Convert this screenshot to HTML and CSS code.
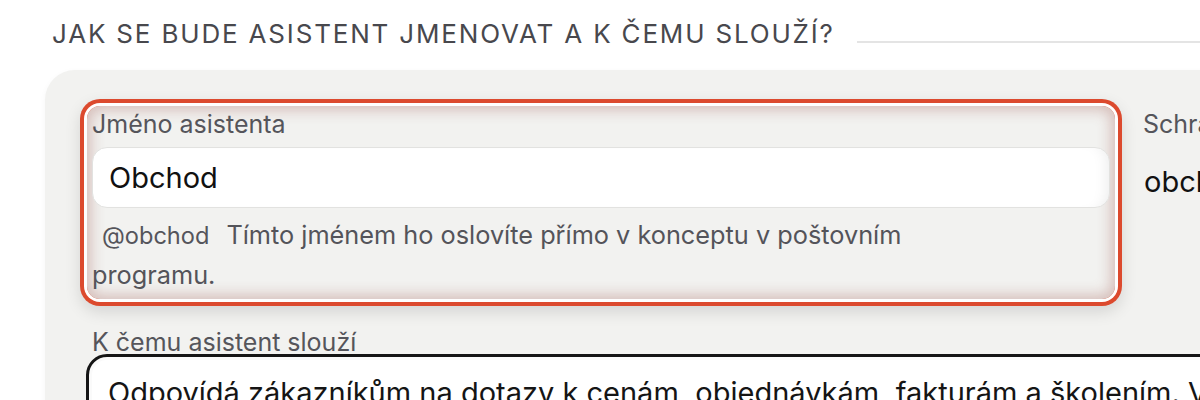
FILE: index.html
```html
<!DOCTYPE html>
<html lang="cs">
<head>
<meta charset="utf-8">
<title>Asistent</title>
<link rel="stylesheet" href="styles.css">
</head>
<body>
<div class="page">
  <div class="section-head">
    <h2 class="section-title">Jak se bude asistent jmenovat a k čemu slouží?</h2>
    <span class="section-rule"></span>
  </div>
  <div class="card">
    <div class="row">
      <div class="field field--active">
        <label class="field-label">Jméno asistenta</label>
        <div class="input">Obchod</div>
        <p class="hint"><span class="handle">@obchod</span>Tímto jménem ho oslovíte přímo v konceptu v poštovním programu.</p>
      </div>
      <div class="field">
        <label class="field-label">Schránka</label>
        <div class="input input--plain">obchod@firma.cz</div>
      </div>
    </div>
    <div class="field field--wide">
      <label class="field-label">K čemu asistent slouží</label>
      <div class="textarea">Odpovídá zákazníkům na dotazy k cenám, objednávkám, fakturám a školením. Vždy odpovídá zdvořile a věcně.</div>
    </div>
  </div>
</div>
</body>
</html>
```

FILE: styles.css
```css
html, body {
  margin: 0;
  padding: 0;
  background: #ffffff;
  overflow: hidden;
  font-family: "Inter", "Noto Sans", sans-serif;
}

.page {
  width: 1200px;
  height: 400px;
  overflow: hidden;
  padding: 18px 0 0 45px;
  box-sizing: border-box;
}

.section-head {
  display: flex;
  align-items: center;
  padding-left: 7px;
  height: 32px;
}

.section-title {
  margin: 0;
  font-size: 26px;
  line-height: 32px;
  font-weight: 400;
  text-transform: uppercase;
  letter-spacing: 0.07em;
  color: #48484d;
  white-space: nowrap;
}

.section-rule {
  flex: 1;
  height: 2px;
  background: #e4e4e4;
  margin-left: 22px;
  margin-top: 16px;
}

.card {
  margin-top: 20px;
  width: 1600px;
  background: #f2f2f0;
  border-radius: 30px;
  padding: 41px 47px 40px;
  box-sizing: border-box;
  box-shadow: 0 2px 6px rgba(0, 0, 0, 0.04);
}

.row {
  display: grid;
  grid-template-columns: 1018px 400px;
  column-gap: 33px;
  align-items: start;
}

.field-label {
  display: block;
  font-size: 25px;
  line-height: 26px;
  color: #55555b;
  white-space: nowrap;
}

.field--active {
  margin: -5px;
  padding: 5px;
  border-radius: 13px;
  box-shadow:
    inset 0 0 14px 4px rgba(150, 70, 60, 0.3),
    0 0 0 3px #ffffff,
    0 0 0 7px #dc4a2e,
    0 6px 16px 7px rgba(0, 0, 0, 0.12);
}

.input {
  margin-top: 10px;
  height: 61px;
  box-sizing: border-box;
  display: flex;
  align-items: center;
  padding: 0 16px;
  background: #ffffff;
  border: 1px solid #e2e2e0;
  border-radius: 15px;
  font-size: 29px;
  color: #111111;
  box-shadow: inset -12px 0 14px -10px rgba(0, 0, 0, 0.08);
  white-space: nowrap;
}

.input--plain {
  background: transparent;
  border-color: transparent;
  box-shadow: none;
  padding: 0;
  margin-top: 14px;
}

.hint {
  margin: 7px 0 0;
  max-width: 880px;
  font-size: 25.3px;
  line-height: 39px;
  color: #54545a;
}

.handle {
  padding: 0 10px;
  margin-right: 7px;
  font-size: 23.6px;
  color: #55555b;
}

.field--wide {
  margin-top: 35px;
}

.textarea {
  margin-top: 5px;
  padding: 14px 16px 20px;
  background: #ffffff;
  border-radius: 15px;
  outline: 3px solid #151515;
  outline-offset: 3px;
  box-shadow: 0 0 0 3px #fafafa;
  font-size: 29px;
  line-height: 38px;
  color: #151515;
  white-space: nowrap;
  overflow: hidden;
}
```
